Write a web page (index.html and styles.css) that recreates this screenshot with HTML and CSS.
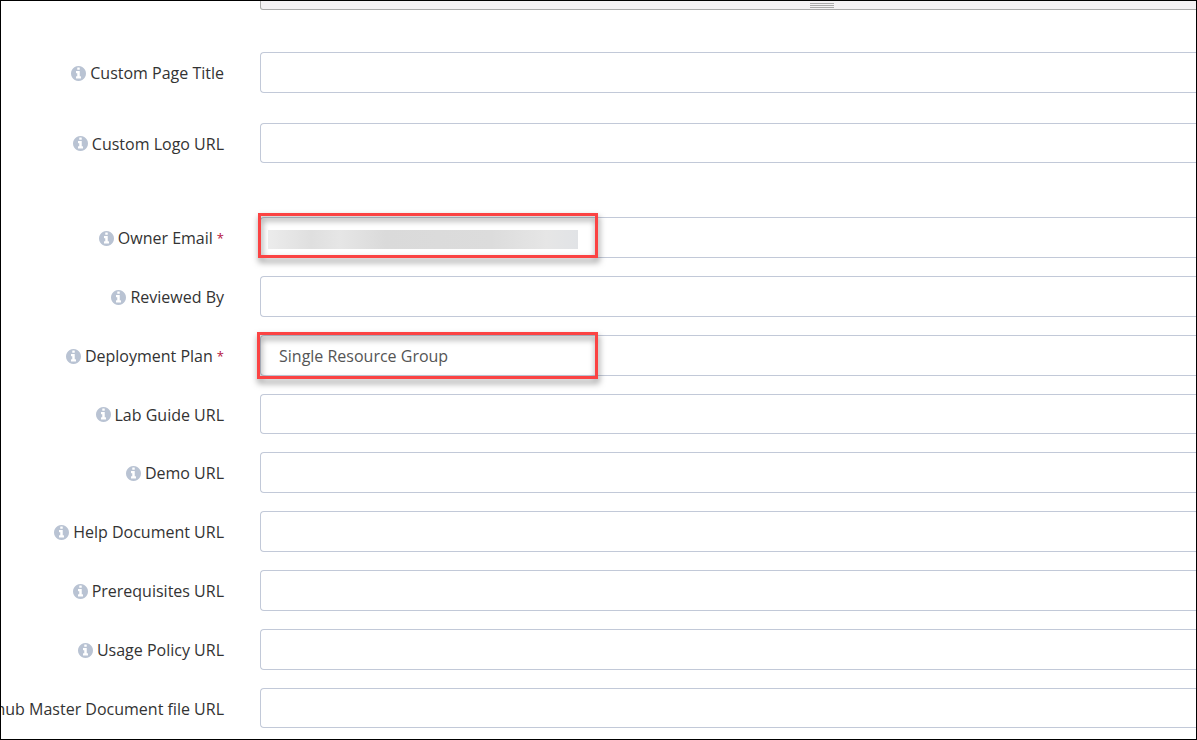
FILE: index.html
```html
<!DOCTYPE html>
<html lang="en">
<head>
<meta charset="utf-8">
<title>Template settings</title>
<link rel="stylesheet" href="styles.css">
</head>
<body>
<svg class="sprite" aria-hidden="true">
  <symbol id="info" viewBox="128 128 1536 1536"><path d="M1152 1376v-160q0-14-9-23t-23-9h-96v-512q0-14-9-23t-23-9h-320q-14 0-23 9t-9 23v160q0 14 9 23t23 9h96v320h-96q-14 0-23 9t-9 23v160q0 14 9 23t23 9h448q14 0 23-9t9-23zM1024 480v-160q0-14-9-23t-23-9h-192q-14 0-23 9t-9 23v160q0 14 9 23t23 9h192q14 0 23-9t9-23zM1664 896q0 209-103 385.500t-279.500 279.500-385.500 103-385.500-103-279.500-279.500-103-385.500 103-385.500 279.500-279.500 385.500-103 385.500 103 279.500 279.500 103 385.500z"/></symbol>
</svg>
<form class="form">
  <div class="resizer"><span class="grip"></span></div>

  <div class="group group-branding">
    <div class="row">
      <label class="label" for="title"><svg class="icon"><use href="#info"/></svg>Custom Page Title</label>
      <div class="control"><input class="field" id="title" type="text"></div>
    </div>
    <div class="row">
      <label class="label" for="logo"><svg class="icon"><use href="#info"/></svg>Custom Logo URL</label>
      <div class="control"><input class="field field-short" id="logo" type="text"></div>
    </div>
  </div>

  <div class="group group-details">
    <div class="row">
      <label class="label" for="owner"><svg class="icon"><use href="#info"/></svg>Owner Email <span class="required">*</span></label>
      <div class="control">
        <input class="field" id="owner" type="email">
        <span class="redaction"></span>
        <span class="highlight highlight-owner"></span>
      </div>
    </div>
    <div class="row">
      <label class="label" for="reviewed"><svg class="icon"><use href="#info"/></svg>Reviewed By</label>
      <div class="control"><input class="field" id="reviewed" type="text"></div>
    </div>
    <div class="row">
      <label class="label" for="plan"><svg class="icon"><use href="#info"/></svg>Deployment Plan <span class="required">*</span></label>
      <div class="control">
        <select class="field" id="plan"><option>Single Resource Group</option></select>
        <span class="highlight highlight-plan"></span>
      </div>
    </div>
    <div class="row">
      <label class="label" for="guide"><svg class="icon"><use href="#info"/></svg>Lab Guide URL</label>
      <div class="control"><input class="field field-short" id="guide" type="text"></div>
    </div>
    <div class="row">
      <label class="label" for="demo"><svg class="icon"><use href="#info"/></svg>Demo URL</label>
      <div class="control"><input class="field" id="demo" type="text"></div>
    </div>
    <div class="row">
      <label class="label" for="help"><svg class="icon"><use href="#info"/></svg>Help Document URL</label>
      <div class="control"><input class="field" id="help" type="text"></div>
    </div>
    <div class="row">
      <label class="label" for="prereq"><svg class="icon"><use href="#info"/></svg>Prerequisites URL</label>
      <div class="control"><input class="field" id="prereq" type="text"></div>
    </div>
    <div class="row">
      <label class="label" for="policy"><svg class="icon"><use href="#info"/></svg>Usage Policy URL</label>
      <div class="control"><input class="field" id="policy" type="text"></div>
    </div>
    <div class="row">
      <label class="label" for="master">hub Master Document file URL</label>
      <div class="control"><input class="field field-short" id="master" type="text"></div>
    </div>
  </div>
</form>
</body>
</html>
```
FILE: styles.css
```css
* { box-sizing: border-box; }

body {
  margin: 0;
  background: #fff;
  font-family: "Open Sans", "Noto Sans", sans-serif;
  font-size: 16px;
  line-height: 24px;
  color: #333;
}

.sprite { position: absolute; width: 0; height: 0; }

.form {
  min-height: 100vh;
  border: 1px solid #000;
  overflow: hidden;
}

.resizer {
  display: flex;
  justify-content: center;
  height: 9px;
  margin: 0 -188px 42px 259px;
  padding-top: 2px;
  background: #f4f2f4;
  border: 1px solid #aaa;
  border-top: 0;
  border-radius: 0 0 0 3px;
}

.grip {
  width: 24px;
  height: 5px;
  background: repeating-linear-gradient(#aaa 0 1px, transparent 1px 2px);
}

.group { display: flex; flex-direction: column; }
.group-branding { gap: 30px; margin-bottom: 54px; }
.group-details { gap: 18px; }

.row {
  display: grid;
  grid-template-columns: 223px 1fr;
  column-gap: 36px;
  align-items: center;
}

.label {
  display: flex;
  align-items: center;
  justify-content: flex-end;
  gap: 4px;
  padding-top: 1px;
  white-space: nowrap;
}

.icon {
  flex: none;
  width: 15px;
  height: 15px;
  fill: #b9c3d3;
}

.required { font-size: 13px; color: #b5123e; }

.control { position: relative; display: flex; }

.field {
  flex: 1;
  min-width: 0;
  height: 41px;
  padding: 0 18px;
  border: 1px solid #c2c9d8;
  border-right: 0;
  border-radius: 4px 0 0 4px;
  outline: 0;
  appearance: none;
  background: #fff;
  color: #555;
  font: inherit;
}

.field-short { height: 40px; }

.redaction {
  position: absolute;
  left: 8px;
  top: 13px;
  width: 310px;
  height: 19px;
  background: linear-gradient(90deg, #ececec, #dfdfdf 14%, #e6e6e6 23%, #dadada 38%, #dcdcdc 72%, #e6e6e6 90%, #e1e3e6);
}

.highlight {
  position: absolute;
  border: 3px solid #fb4343;
  filter: drop-shadow(1px 4px 3px rgba(0, 0, 0, 0.5));
  pointer-events: none;
}

.highlight-owner { left: -2px; top: -4px; width: 340px; height: 45px; }
.highlight-plan { left: -3px; top: -3px; width: 341px; height: 47px; }
```
